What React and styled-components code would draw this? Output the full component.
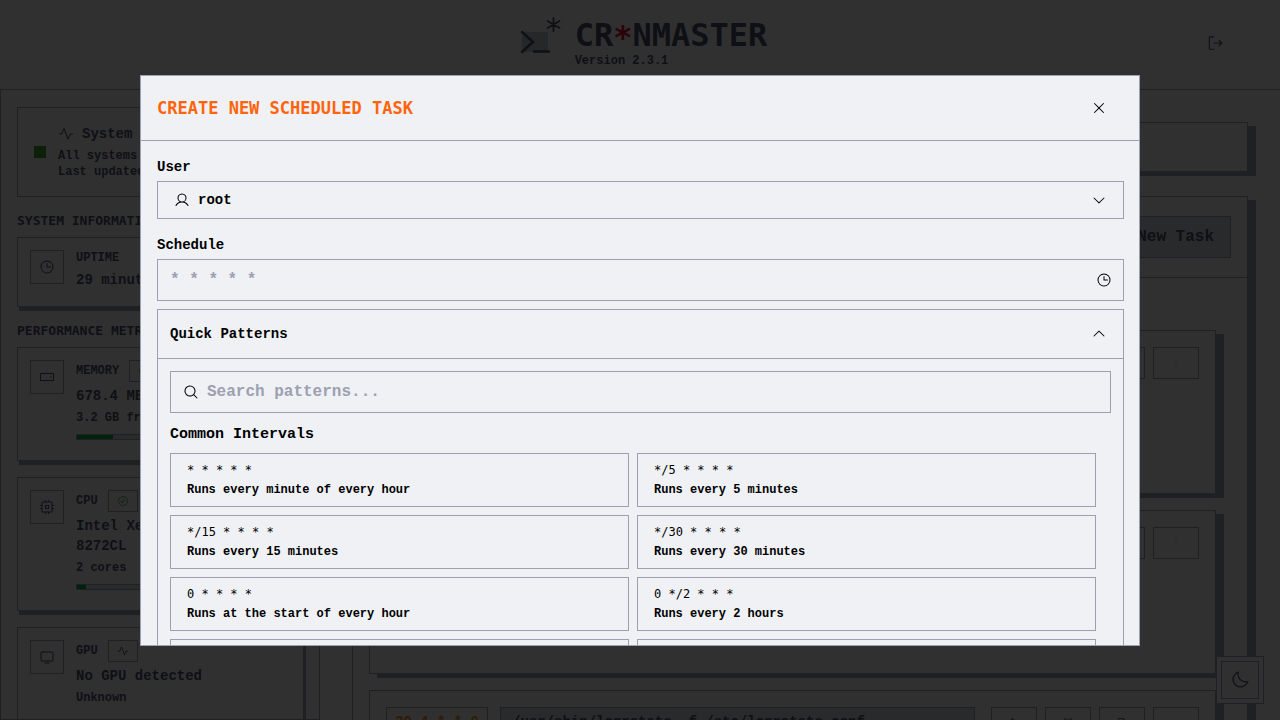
import React, {useState} from 'react';
import styled, {createGlobalStyle} from 'styled-components';
import {
    PiCaretDown, PiCaretUp, PiCheckCircle, PiClock, PiCpu, PiDotsThreeVertical, PiFileText, PiHardDrive,
    PiMagnifyingGlass, PiMonitor, PiMoon, PiPause, PiPlay, PiPlus, PiPulse, PiSignOut, PiUser, PiX
} from 'react-icons/pi';

const patterns = [
    {cron: '* * * * *', text: 'Runs every minute of every hour'},
    {cron: '*/5 * * * *', text: 'Runs every 5 minutes'},
    {cron: '*/15 * * * *', text: 'Runs every 15 minutes'},
    {cron: '*/30 * * * *', text: 'Runs every 30 minutes'},
    {cron: '0 * * * *', text: 'Runs at the start of every hour'},
    {cron: '0 */2 * * *', text: 'Runs every 2 hours'},
    {cron: '0 */6 * * *', text: 'Runs every 6 hours'},
    {cron: '0 */12 * * *', text: 'Runs every 12 hours'},
];

const tasks = [
    {id: 1, cron: '10 3 * * *', command: 'e2scrub_all -A -r'},
    {id: 2, cron: '30 3 * * 0', command: 'e2scrub_all_cron'},
    {id: 3, cron: '30 4 * * 0', command: '/usr/sbin/logrotate -f /etc/logrotate.conf'},
];

const metrics = [
    {name: 'MEMORY', icon: <PiHardDrive/>, ok: true, value: '678.4 MB / 3.8 GB', detail: '3.2 GB free', usage: 17},
    {name: 'CPU', icon: <PiCpu/>, ok: true, value: 'Intel Xeon Platinum 8272CL', detail: '2 cores', usage: 4},
    {name: 'GPU', icon: <PiMonitor/>, ok: false, value: 'No GPU detected', detail: 'Unknown'},
];

const Logo = () => (
    <svg width="44" height="44" viewBox="0 3 44 44" fill="none" stroke="currentColor" strokeLinecap="round"
         aria-hidden="true">
        <rect x="3" y="18" width="26" height="20" fill="#bcc0cc" stroke="none"/>
        <path d="M3 18l11 10L3 38M15 37.500h15" strokeWidth="2.500"/>
        <path d="M34.500 4v13M28.500 7l12 7M28.500 14l12-7" strokeWidth="1.800"/>
    </svg>
);

const App = () => {
    const [open, setOpen] = useState(true);
    const [showPatterns, setShowPatterns] = useState(true);
    const [schedule, setSchedule] = useState('');
    const [search, setSearch] = useState('');

    const visible = patterns.filter(p => (p.cron + p.text).toLowerCase().includes(search.toLowerCase()));

    return (
        <Page>
            <GlobalStyle/>
            <Header>
                <Brand>
                    <Logo/>
                    <div>
                        <h1>CR<span>*</span>NMASTER</h1>
                        <p>Version 2.3.1</p>
                    </div>
                </Brand>
                <LogoutButton aria-label="Log out"><PiSignOut/></LogoutButton>
            </Header>
            <Columns>
                <Sidebar>
                    <StatusCard>
                        <StatusDot/>
                        <div>
                            <Value><PiPulse/>System Status</Value>
                            <Small>All systems running</Small>
                            <Small>Last updated</Small>
                        </div>
                    </StatusCard>
                    <SectionTitle>SYSTEM INFORMATION</SectionTitle>
                    <MetricCard>
                        <IconBox><PiClock/></IconBox>
                        <MetricBody>
                            <Small as="h3">UPTIME</Small>
                            <Value>29 minutes</Value>
                        </MetricBody>
                    </MetricCard>
                    <SectionTitle>PERFORMANCE METRICS</SectionTitle>
                    {metrics.map(metric => (
                        <MetricCard key={metric.name}>
                            <IconBox>{metric.icon}</IconBox>
                            <MetricBody>
                                <MetricHead>
                                    <Small as="h3">{metric.name}</Small>
                                    <Badge $ok={metric.ok}>{metric.ok ? <PiCheckCircle/> : <PiPulse/>}</Badge>
                                </MetricHead>
                                <Value>{metric.value}</Value>
                                <Detail>{metric.detail}</Detail>
                                {metric.usage && <Bar><div style={{width: `${metric.usage}%`}}/></Bar>}
                            </MetricBody>
                        </MetricCard>
                    ))}
                </Sidebar>
                <Main>
                    <Toolbar/>
                    <Tasks>
                        <TasksHeader>
                            <NewTaskButton onClick={() => setOpen(true)}><PiPlus/>New Task</NewTaskButton>
                        </TasksHeader>
                        <TaskList>
                            {tasks.map(task => (
                                <TaskCard key={task.id}>
                                    <Cron>{task.cron}</Cron>
                                    <Command>{task.command}</Command>
                                    <Actions>
                                        <button aria-label="Run"><PiPlay/></button>
                                        <button aria-label="Pause"><PiPause/></button>
                                        <button aria-label="Logs"><PiFileText/></button>
                                        <button aria-label="More"><PiDotsThreeVertical/></button>
                                    </Actions>
                                </TaskCard>
                            ))}
                        </TaskList>
                    </Tasks>
                </Main>
            </Columns>
            <ThemeToggle>
                <button aria-label="Dark mode"><PiMoon/></button>
            </ThemeToggle>
            {open && (
                <Overlay>
                    <Modal role="dialog" aria-labelledby="modal-title">
                        <ModalHeader>
                            <h2 id="modal-title">CREATE NEW SCHEDULED TASK</h2>
                            <button aria-label="Close" onClick={() => setOpen(false)}><PiX/></button>
                        </ModalHeader>
                        <ModalBody>
                            <Label htmlFor="user">User</Label>
                            <SelectField>
                                <PiUser/>
                                <select id="user" defaultValue="root">
                                    <option>root</option>
                                </select>
                                <PiCaretDown/>
                            </SelectField>
                            <Label htmlFor="schedule">Schedule</Label>
                            <TextField>
                                <input id="schedule" placeholder="* * * * *" value={schedule}
                                       onChange={e => setSchedule(e.target.value)}/>
                                <PiClock/>
                            </TextField>
                            <Patterns>
                                <PatternsToggle onClick={() => setShowPatterns(!showPatterns)}>
                                    Quick Patterns
                                    {showPatterns ? <PiCaretUp/> : <PiCaretDown/>}
                                </PatternsToggle>
                                {showPatterns && (
                                    <PatternsBody>
                                        <TextField>
                                            <PiMagnifyingGlass/>
                                            <input aria-label="Search patterns" placeholder="Search patterns..."
                                                   value={search} onChange={e => setSearch(e.target.value)}/>
                                        </TextField>
                                        <h3>Common Intervals</h3>
                                        <PatternGrid>
                                            {visible.map(p => (
                                                <PatternButton key={p.cron} onClick={() => setSchedule(p.cron)}>
                                                    <code>{p.cron}</code>
                                                    <span>{p.text}</span>
                                                </PatternButton>
                                            ))}
                                        </PatternGrid>
                                    </PatternsBody>
                                )}
                            </Patterns>
                        </ModalBody>
                    </Modal>
                </Overlay>
            )}
        </Page>
    );
};

const GlobalStyle = createGlobalStyle`
  * {
    box-sizing: border-box;
    margin: 0;
    padding: 0;
  }

  body {
    background: #eff1f5;
    color: #4c4f69;
    font: 600 14px/20px "Liberation Mono", monospace;
  }

  h1, h2 {
    font-family: "DejaVu Sans Mono", monospace;
  }

  button, input, select, code {
    font: inherit;
    color: inherit;
    background: none;
    border: none;
    border-radius: 0;
  }

  button {
    cursor: pointer;
  }

  svg {
    flex-shrink: 0;
  }
`;

const Page = styled.div`
  display: flex;
  flex-direction: column;
  height: 100vh;
  overflow: hidden;
`;

const Header = styled.header`
  display: grid;
  grid-template-columns: 1fr auto 1fr;
  align-items: center;
  flex-shrink: 0;
  padding: 12px 48px 16px 54px;
  border-bottom: 1px solid #9ca0b0;
`;

const Brand = styled.div`
  grid-column: 2;
  display: flex;
  gap: 12px;
  padding: 5px 0 1px;

  h1 {
    font-size: 32px;
    line-height: 36px;
  }

  span {
    color: #d20f39;
    line-height: 24px;
    vertical-align: middle;
  }

  p {
    font-size: 12px;
    line-height: 16px;
    padding-bottom: 3px;
  }
`;

const LogoutButton = styled.button`
  justify-self: end;
  display: flex;
  padding: 8px;
  font-size: 18px;
`;

const Columns = styled.div`
  display: flex;
  flex: 1;
  min-height: 0;
`;

const Sidebar = styled.aside`
  width: 320px;
  flex-shrink: 0;
  overflow: hidden;
  padding: 16px 15px 16px 16px;
  border: 1px solid #9ca0b0;
  border-top: none;
`;

const StatusCard = styled.section`
  display: flex;
  align-items: center;
  gap: 12px;
  margin-top: 1px;
  padding: 16px;
  border: 1px solid #9ca0b0;
`;

const StatusDot = styled.div`
  width: 12px;
  height: 12px;
  background: #40a02b;
`;

const Value = styled.p`
  display: flex;
  align-items: center;
  gap: 8px;
  margin-bottom: 4px;

  svg {
    font-size: 16px;
  }
`;

const Small = styled.p`
  font-size: 12px;
  line-height: 16px;
`;

const Detail = styled(Small)`
  margin-bottom: 8px;
`;

const SectionTitle = styled.h2`
  margin: 16px 0 8px;
  font-size: 13px;
  line-height: 16px;
`;

const MetricCard = styled.section`
  display: flex;
  gap: 12px;
  margin-bottom: 16px;
  padding: 12px;
  border: 1px solid #9ca0b0;
  box-shadow: 2px 4px 0 #9ca0b0;
`;

const IconBox = styled.div`
  display: grid;
  place-items: center;
  flex-shrink: 0;
  width: 34px;
  height: 34px;
  border: 1px solid #9ca0b0;
  font-size: 16px;
`;

const MetricBody = styled.div`
  flex: 1;

  > h3 {
    margin-bottom: 4px;
  }
`;

const MetricHead = styled.div`
  display: flex;
  align-items: center;
  gap: 10px;
  margin-bottom: 4px;
`;

const Badge = styled.span`
  display: flex;
  padding: 4px 8px;
  border: 1px solid #9ca0b0;
  font-size: 12px;
  color: ${props => props.$ok ? '#40a02b' : 'inherit'};
`;

const Bar = styled.div`
  height: 6px;
  margin-bottom: 8px;
  background: #ccd0da;
  border: 1px solid #9ca0b0;

  div {
    height: 100%;
    background: #00a63e;
  }
`;

const Main = styled.main`
  flex: 1;
  min-width: 0;
  padding: 32px;
`;

const Toolbar = styled.div`
  height: 50px;
  margin-bottom: 24px;
  border: 1px solid #9ca0b0;
  box-shadow: 8px 4px 0 #9ca0b0;
`;

const Tasks = styled.section`
  border: 1px solid #9ca0b0;
  box-shadow: 8px 4px 0 #9ca0b0;
`;

const TasksHeader = styled.div`
  display: flex;
  justify-content: flex-end;
  padding: 19px 16px;
  border-bottom: 1px solid #9ca0b0;
`;

const NewTaskButton = styled.button`
  display: flex;
  align-items: center;
  gap: 8px;
  padding: 8px 16px;
  border: 1px solid #9ca0b0;
  background: #ccd0da;
  font-size: 16px;
  line-height: 24px;
`;

const TaskList = styled.div`
  display: flex;
  flex-direction: column;
  gap: 16px;
  padding: 52px 31px 16px 16px;
`;

const TaskCard = styled.article`
  display: flex;
  align-items: flex-start;
  gap: 12px;
  min-height: 164px;
  padding: 16px;
  border: 1px solid #9ca0b0;
  box-shadow: 8px 4px 0 #9ca0b0;
`;

const Cron = styled.code`
  padding: 4px 8px;
  border: 1px solid #9ca0b0;
  color: #df8e1d;
`;

const Command = styled.pre`
  flex: 1;
  min-width: 0;
  overflow: hidden;
  padding: 4px 11px;
  border: 1px solid #9ca0b0;
  background: #ccd0da;
  font: inherit;
`;

const Actions = styled.div`
  display: flex;
  gap: 8px;
  margin-left: 4px;

  button {
    display: grid;
    place-items: center;
    width: 46px;
    height: 32px;
    border: 1px solid #9ca0b0;
    font-size: 12px;
  }

  button:last-child svg {
    opacity: 0.5;
  }
`;

const ThemeToggle = styled.div`
  position: fixed;
  right: 16px;
  bottom: 16px;
  padding: 4px;
  border: 1px solid #9ca0b0;
  background: #eff1f5;

  button {
    display: grid;
    place-items: center;
    width: 38px;
    height: 38px;
    border: 1px solid #9ca0b0;
    font-size: 20px;
  }
`;

const Overlay = styled.div`
  position: fixed;
  inset: 0;
  display: flex;
  align-items: center;
  justify-content: center;
  padding: 75px 16px 74px;
  background: rgba(0, 0, 0, 0.8);
`;

const Modal = styled.div`
  display: flex;
  flex-direction: column;
  width: 100%;
  max-width: 1000px;
  max-height: 100%;
  border: 1px solid #9ca0b0;
  background: #eff1f5;
  color: #000;
`;

const ModalHeader = styled.div`
  display: flex;
  align-items: center;
  justify-content: space-between;
  flex-shrink: 0;
  padding: 16px;
  border-bottom: 1px solid #9ca0b0;

  h2 {
    color: #fe640b;
    font-size: 17px;
    line-height: 32px;
  }

  button {
    display: flex;
    padding: 8px 16px;
    font-size: 16px;
  }
`;

const ModalBody = styled.div`
  padding: 16px 15px 16px 16px;
  overflow-y: auto;
  scrollbar-width: none;
`;

const Label = styled.label`
  display: block;
  margin-bottom: 4px;
`;

const SelectField = styled.div`
  display: grid;
  align-items: center;
  margin-bottom: 16px;
  border: 1px solid #9ca0b0;

  > * {
    grid-area: 1 / 1;
  }

  select {
    appearance: none;
    padding: 8px 40px;
  }

  svg {
    margin: 0 16px;
    font-size: 16px;
    pointer-events: none;
  }

  svg:last-child {
    justify-self: end;
  }
`;

const TextField = styled.div`
  display: flex;
  align-items: center;
  gap: 8px;
  padding: 0 11px 0 12px;
  border: 1px solid #9ca0b0;

  input {
    flex: 1;
    min-width: 0;
    padding: 8px 0;
    font-size: 16px;
    line-height: 24px;
    outline: none;
  }

  input::placeholder {
    color: #9ca0b0;
  }

  svg {
    font-size: 16px;
  }
`;

const Patterns = styled.section`
  margin-top: 8px;
  border: 1px solid #9ca0b0;
`;

const PatternsToggle = styled.button`
  display: flex;
  align-items: center;
  justify-content: space-between;
  width: 100%;
  padding: 14px 16px 14px 12px;

  svg {
    font-size: 16px;
  }
`;

const PatternsBody = styled.div`
  padding: 12px;
  border-top: 1px solid #9ca0b0;

  h3 {
    margin: 12px 0 8px;
    font-size: 15px;
    line-height: 20px;
  }
`;

const PatternGrid = styled.div`
  display: grid;
  grid-template-columns: 1fr 1fr;
  gap: 8px;
  padding-right: 15px;
`;

const PatternButton = styled.button`
  display: flex;
  flex-direction: column;
  gap: 4px;
  padding: 8px 16px;
  border: 1px solid #9ca0b0;
  text-align: left;
  font-size: 12px;
  line-height: 16px;

  code {
    font-family: "DejaVu Sans Mono", monospace;
    font-weight: 400;
  }
`;

export default App;
